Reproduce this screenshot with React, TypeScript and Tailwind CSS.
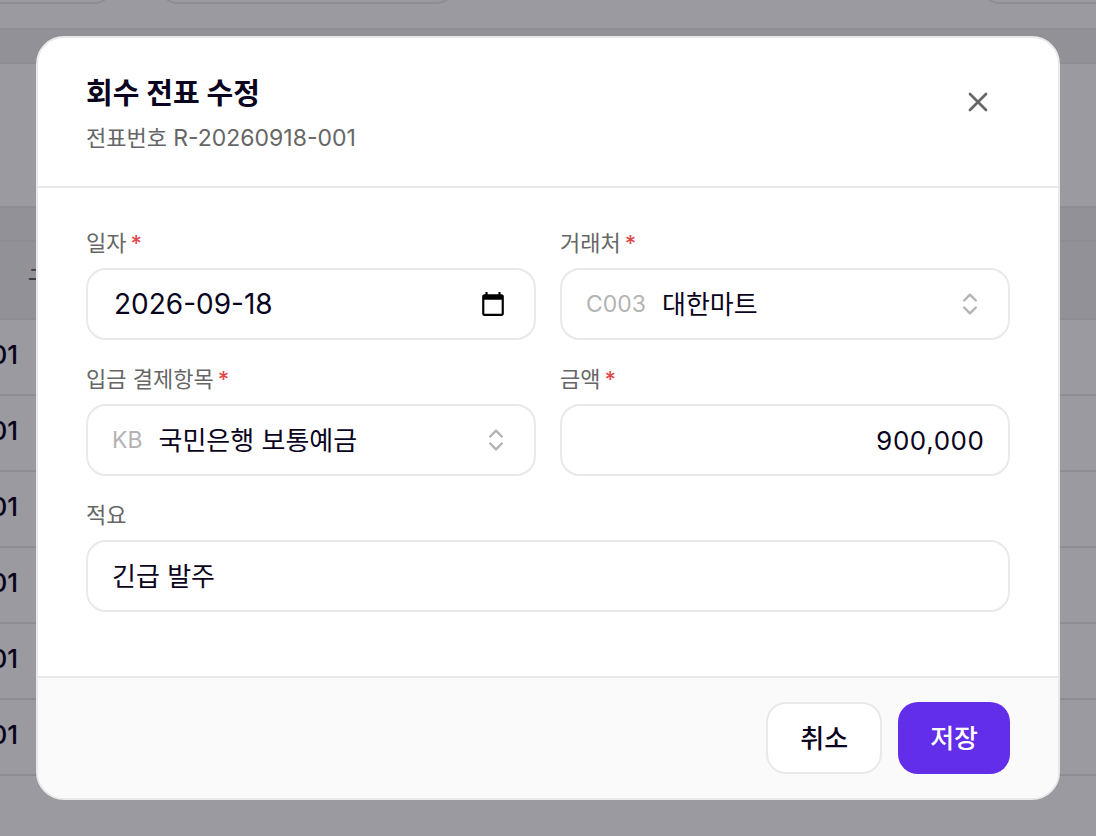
import { useState } from 'react'
import type { ReactNode } from 'react'
import { ChevronsUpDown, X } from 'lucide-react'

const rows = [1, 2, 3, 4, 5, 6]

const customers = [
  { code: 'C003', name: '대한마트' },
  { code: 'C004', name: '한빛상사' },
]

const accounts = [
  { code: 'KB', name: '국민은행 보통예금' },
  { code: 'SH', name: '신한은행 보통예금' },
]

const control = 'h-18 w-full rounded-[20px] border-2 border-[#e9e9e9] bg-white text-[26px] text-[#0a0420]'

export default function App() {
  return (
    <div className="relative min-h-screen overflow-hidden bg-white font-['Inter','Noto_Sans_CJK_KR',sans-serif] text-[#0a0420]">
      <Ledger />
      <div className="absolute inset-0 flex items-center justify-center bg-[#050214]/40 p-9">
        <EditDialog />
      </div>
    </div>
  )
}

function Ledger() {
  return (
    <div aria-hidden="true">
      <div className="flex h-[30px] items-start justify-between border-b-2 border-[#e9e9e9]">
        <div className="flex h-1 items-end gap-11">
          <div className="h-18 w-[114px] shrink-0 rounded-r-[20px] border-2 border-l-0 border-[#e9e9e9]" />
          <div className="h-18 w-[298px] shrink-0 rounded-[20px] border-2 border-[#e9e9e9]" />
        </div>
        <div className="flex h-1 items-end">
          <div className="h-18 w-[116px] shrink-0 rounded-l-[20px] border-2 border-r-0 border-[#e9e9e9]" />
        </div>
      </div>
      <div className="h-[34px] border-b-2 border-[#e9e9e9] bg-[#f0f0f0]" />
      <div className="h-36 border-b-2 border-[#e9e9e9]" />
      <div className="h-[34px] border-b-2 border-[#e9e9e9] bg-[#f0f0f0]" />
      <table className="w-full table-fixed border-collapse">
        <thead>
          <tr className="h-[77px] border-b-2 border-[#e9e9e9] bg-[#f0f0f0] text-[22px] text-[#666]">
            <th className="w-7 p-0" />
            <th className="p-0 pb-1 text-left font-medium">구분</th>
          </tr>
        </thead>
        <tbody>
          {rows.map(row => (
            <tr key={row} className="h-19 border-b-2 border-[#e9e9e9] text-[26px] font-medium">
              <td className="p-0 pb-1.5">
                <div className="flex w-[18px] justify-end">01</div>
              </td>
              <td className="p-0" />
            </tr>
          ))}
        </tbody>
      </table>
    </div>
  )
}

function EditDialog() {
  const [date, setDate] = useState('2026-09-18')
  const [customer, setCustomer] = useState('C003')
  const [account, setAccount] = useState('KB')
  const [amount, setAmount] = useState('900,000')
  const [memo, setMemo] = useState('긴급 발주')

  return (
    <form
      role="dialog"
      aria-labelledby="dialog-title"
      onSubmit={e => e.preventDefault()}
      className="w-full max-w-5xl overflow-hidden rounded-[28px] border-2 border-[#e9e9e9] bg-white"
    >
      <header className="flex items-start justify-between border-b-2 border-[#e9e9e9] px-12 py-8">
        <div className="space-y-1">
          <h1 id="dialog-title" className="text-[29px] leading-12 font-bold">회수 전표 수정</h1>
          <p className="text-[22px] leading-8 text-[#666]">
            전표번호 <span className="text-[23px]">R-20260918-001</span>
          </p>
        </div>
        <button type="button" aria-label="닫기" className="flex size-16 items-center justify-center text-[#666]">
          <X className="size-8" strokeWidth={2} />
        </button>
      </header>

      <div className="grid grid-cols-2 gap-6 px-12 pt-10 pb-16">
        <Field id="date" label="일자" required>
          <div className={`${control} flex items-center justify-between pr-7 pl-[26px]`}>
            <input
              id="date"
              value={date}
              onChange={e => setDate(e.target.value)}
              className="min-w-0 flex-1 text-[28px] outline-none"
            />
            <button type="button" aria-label="날짜 선택" className="text-black">
              <CalendarIcon />
            </button>
          </div>
        </Field>

        <Field id="customer" label="거래처" required>
          <CodeSelect id="customer" value={customer} options={customers} onChange={setCustomer} />
        </Field>

        <Field id="account" label="입금 결제항목" required>
          <CodeSelect id="account" value={account} options={accounts} onChange={setAccount} />
        </Field>

        <Field id="amount" label="금액" required>
          <input
            id="amount"
            inputMode="numeric"
            value={amount}
            onChange={e => setAmount(e.target.value)}
            className={`${control} px-6 text-right tabular-nums`}
          />
        </Field>

        <div className="col-span-2">
          <Field id="memo" label="적요">
            <input id="memo" value={memo} onChange={e => setMemo(e.target.value)} className={`${control} px-6 pb-1`} />
          </Field>
        </div>
      </div>

      <footer className="flex justify-end gap-4 border-t-2 border-[#e9e9e9] bg-[#fafafa] px-12 py-6 text-[26px] font-medium">
        <button type="button" className="h-18 rounded-[20px] border-2 border-[#e9e9e9] bg-white px-8">취소</button>
        <button type="submit" className="h-18 rounded-[20px] bg-[#622eea] px-8 text-white">저장</button>
      </footer>
    </form>
  )
}

function Field({ id, label, required, children }: {
  id: string
  label: string
  required?: boolean
  children: ReactNode
}) {
  return (
    <div className="space-y-2">
      <label htmlFor={id} className="flex h-8 items-center gap-1 pb-0.5 text-[22px] text-[#666]">
        {label}
        {required && <span className="font-medium text-[#e04848]">*</span>}
      </label>
      {children}
    </div>
  )
}

function CodeSelect({ id, value, options, onChange }: {
  id: string
  value: string
  options: { code: string; name: string }[]
  onChange: (value: string) => void
}) {
  return (
    <div className={`${control} flex items-center gap-4 px-6`}>
      <span className="text-[23px] text-[#b3b3b3]">{value}</span>
      <select
        id={id}
        value={value}
        onChange={e => onChange(e.target.value)}
        className="h-full min-w-0 flex-1 appearance-none outline-none"
      >
        {options.map(o => (
          <option key={o.code} value={o.code}>{o.name}</option>
        ))}
      </select>
      <ChevronsUpDown className="pointer-events-none size-7 shrink-0 text-[#b3b3b3]" />
    </div>
  )
}

function CalendarIcon() {
  return (
    <svg viewBox="0 0 24 24" className="size-[26px]" fill="currentColor">
      <path d="M20 3h-1V1h-2v2H7V1H5v2H4c-1.1 0-2 .9-2 2v16c0 1.1.9 2 2 2h16c1.1 0 2-.9 2-2V5c0-1.1-.9-2-2-2zm0 18H4V8h16v13z" />
    </svg>
  )
}
